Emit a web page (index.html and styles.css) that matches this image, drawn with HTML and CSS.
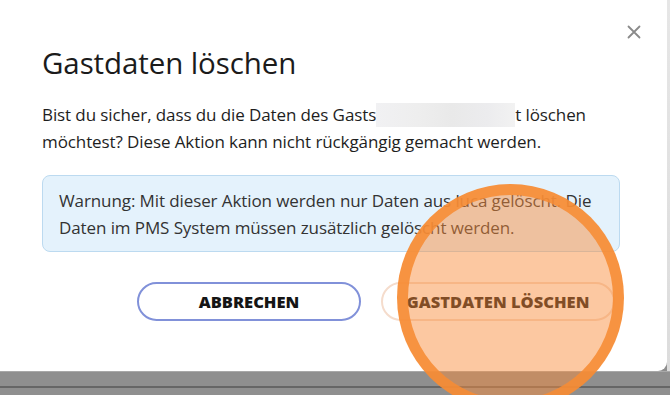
FILE: index.html
```html
<!DOCTYPE html>
<html lang="de">
<head>
<meta charset="utf-8">
<title>Gastdaten löschen</title>
<link rel="stylesheet" href="styles.css">
</head>
<body>
<div class="screen">
  <div class="top">
    <div class="modal">
      <div class="modal-head">
        <button class="close" aria-label="Schließen">
          <svg width="14" height="14" viewBox="0 0 14 14"><path d="M1.5 1.5 L12.5 12.5 M12.5 1.5 L1.5 12.5" stroke="#8a8a8a" stroke-width="1.8" stroke-linecap="round" fill="none"/></svg>
        </button>
      </div>
      <h1 class="title">Gastdaten löschen</h1>
      <p class="text"><span class="line">Bist du sicher, dass du die Daten des Gasts<span class="blur"></span>t löschen</span><span class="line">möchtest? Diese Aktion kann nicht rückgängig gemacht werden.</span></p>
      <div class="warning">Warnung: Mit dieser Aktion werden nur Daten aus luca gelöscht. Die Daten im PMS System müssen zusätzlich gelöscht werden.</div>
      <div class="actions">
        <button class="btn btn-cancel">ABBRECHEN</button>
        <button class="btn btn-delete">GASTDATEN LÖSCHEN</button>
      </div>
    </div>
    <div class="edge"></div>
  </div>
  <div class="band"><div class="band-line"></div></div>
  <div class="touch"></div>
</div>
</body>
</html>
```
FILE: styles.css
```css
* { box-sizing: border-box; }
html, body { margin: 0; padding: 0; }
body {
  width: 670px;
  height: 395px;
  overflow: hidden;
  font-family: "Open Sans", "Noto Sans", sans-serif;
  background: #8e8e8e;
}
.screen {
  position: relative;
  width: 670px;
  height: 395px;
  display: flex;
  flex-direction: column;
}
.top {
  display: flex;
  height: 371px;
  background: #8e8e8e;
}
.modal {
  width: 667px;
  height: 371px;
  background: #ffffff;
  border-radius: 0 0 9px 0;
  padding: 0 0 0 42px;
  display: flex;
  flex-direction: column;
}
.edge {
  flex: 1;
  background: linear-gradient(#e6e6e6, #dcdcdc);
}
.modal-head {
  height: 40px;
  display: flex;
  justify-content: flex-end;
  padding: 25px 26px 0 0;
}
.close {
  border: 0;
  background: none;
  padding: 0;
  width: 14px;
  height: 14px;
  display: flex;
}
.title {
  margin: 6px 0 0;
  font-size: 29.5px;
  font-weight: 400;
  color: #1b1b1b;
  line-height: 34px;
  letter-spacing: -0.1px;
}
.text {
  margin: 21px 0 0;
  width: 582px;
  font-size: 17px;
  line-height: 27px;
  color: #1e1e1e;
  letter-spacing: -0.1px;
  display: flex;
  flex-direction: column;
}
.line {
  display: block;
  height: 27px;
  white-space: nowrap;
}
.blur {
  display: inline-block;
  width: 139px;
  height: 24px;
  vertical-align: -6px;
  background: linear-gradient(90deg, #f1f1f3 0%, #eeeeee 30%, #e9e9e9 55%, #ececee 80%, #f2f2f2 100%);
}
.warning {
  margin-top: 20px;
  width: 578px;
  background: #e4f2fc;
  border: 1px solid #bcdaf0;
  border-radius: 8px;
  padding: 11px 16px 10px;
  font-size: 17px;
  line-height: 27px;
  color: #333333;
  letter-spacing: -0.1px;
}
.actions {
  margin-top: 30px;
  display: flex;
  gap: 20px;
  padding-left: 95px;
}
.btn {
  height: 39px;
  border-radius: 20px;
  background: #ffffff;
  font-family: "Open Sans", "Noto Sans", sans-serif;
  font-weight: 800;
  font-size: 16.5px;
  letter-spacing: 0;
  color: #151515;
  padding: 0;
}
.btn-cancel {
  width: 224px;
  border: 2px solid #8191d9;
}
.btn-delete {
  width: 234px;
  border: 2px solid #f5dccc;
}
.band {
  flex: 1;
  background: #8f8f8f;
  border-top: 1px solid #a8a8a8;
  padding-top: 14px;
}
.band-line {
  height: 2px;
  background: #666666;
}
.touch {
  position: absolute;
  left: 397px;
  top: 184px;
  width: 227px;
  height: 227px;
  border-radius: 50%;
  border: 11px solid rgba(247, 140, 52, 0.88);
  background: rgba(249, 141, 58, 0.48);
}
```
